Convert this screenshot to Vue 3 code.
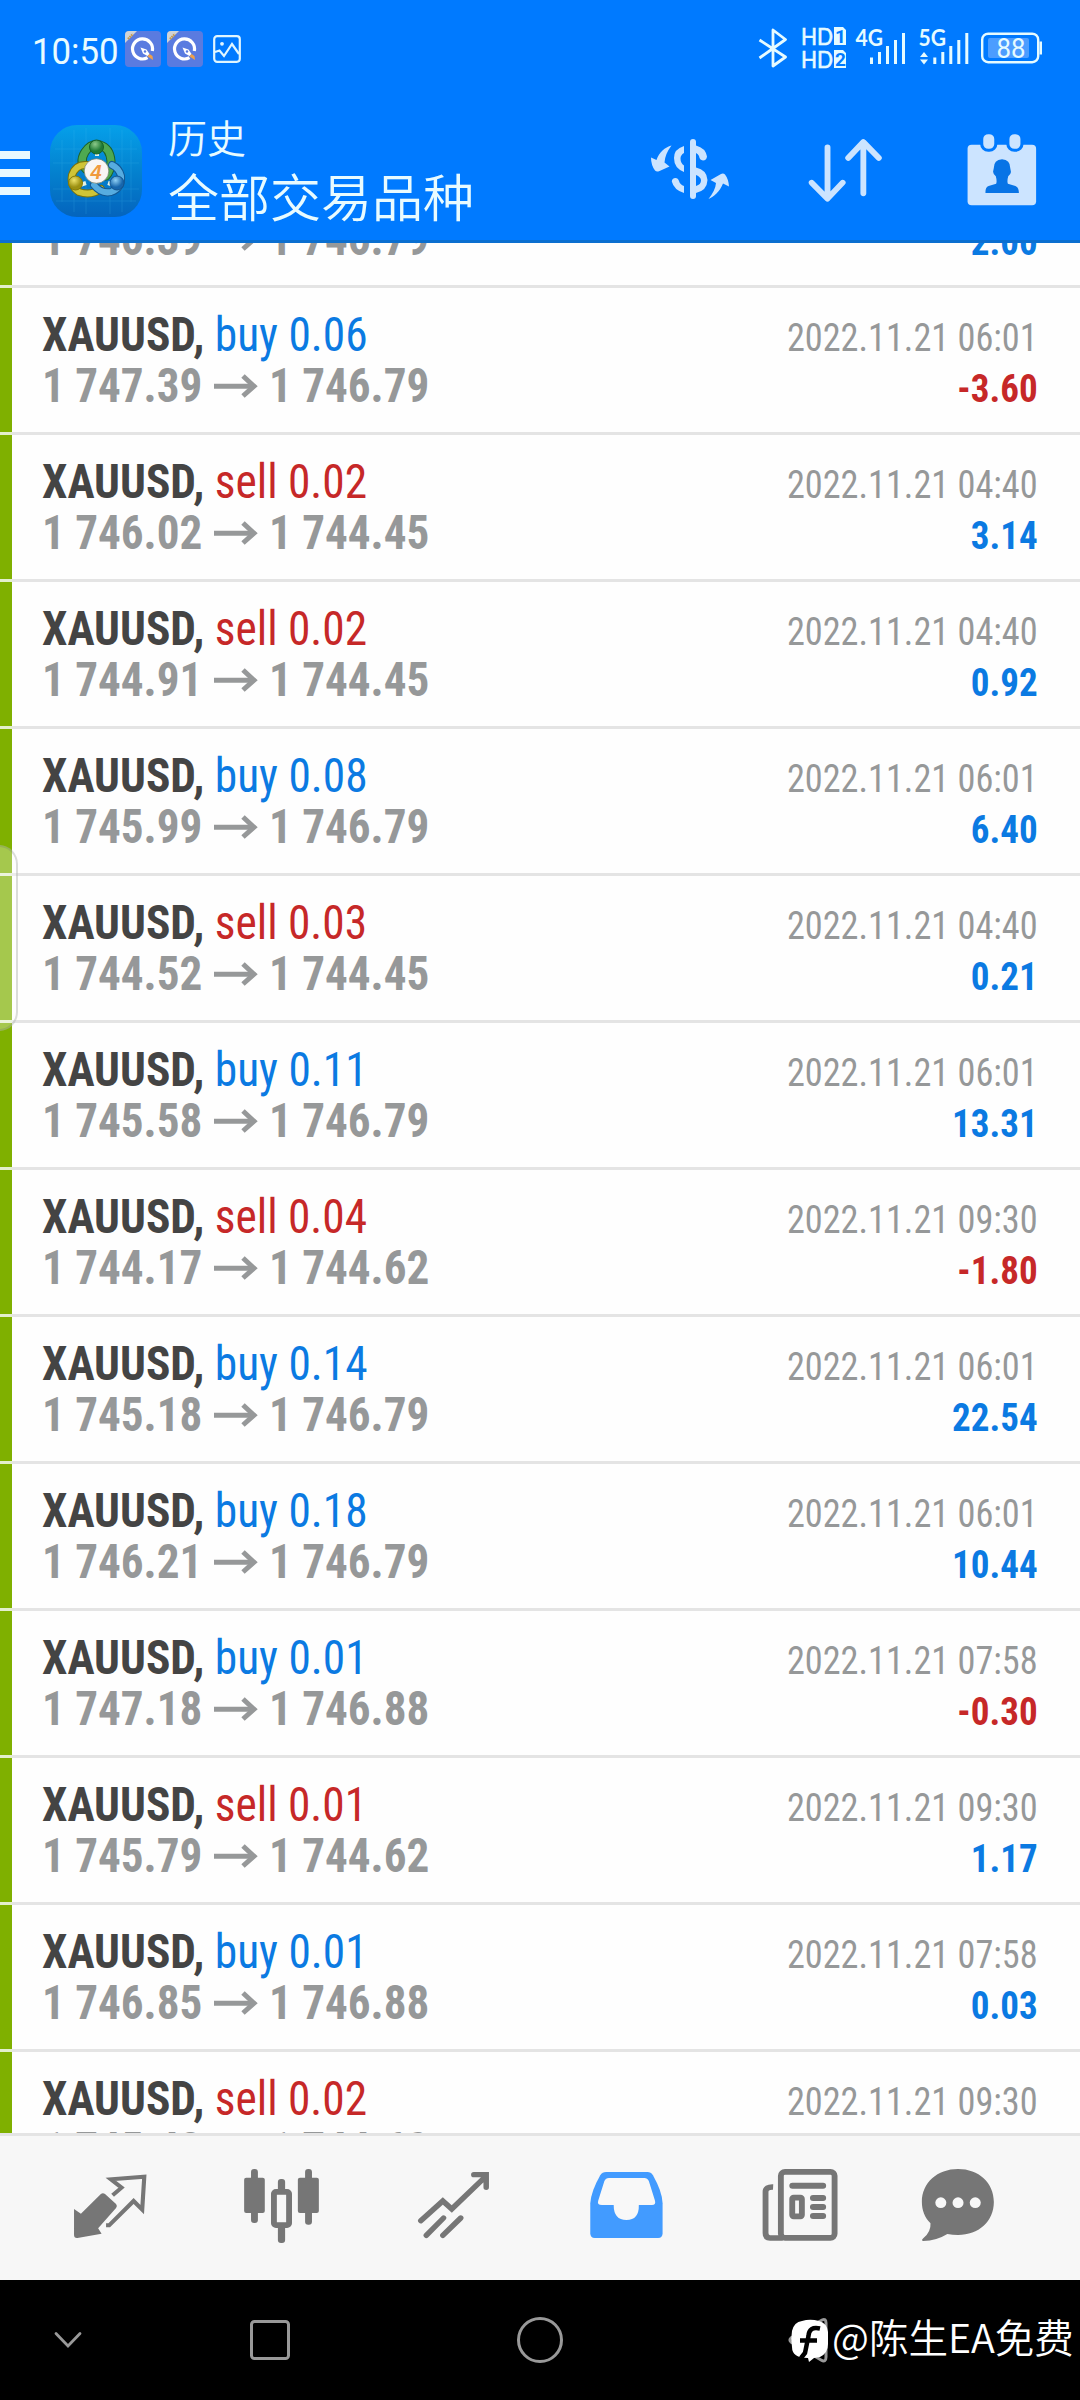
<script setup>
const trades = [
  ['buy', '0.05', '1 746.39', '1 746.79', '2022.11.21 06:01', '2.00'],
  ['buy', '0.06', '1 747.39', '1 746.79', '2022.11.21 06:01', '-3.60'],
  ['sell', '0.02', '1 746.02', '1 744.45', '2022.11.21 04:40', '3.14'],
  ['sell', '0.02', '1 744.91', '1 744.45', '2022.11.21 04:40', '0.92'],
  ['buy', '0.08', '1 745.99', '1 746.79', '2022.11.21 06:01', '6.40'],
  ['sell', '0.03', '1 744.52', '1 744.45', '2022.11.21 04:40', '0.21'],
  ['buy', '0.11', '1 745.58', '1 746.79', '2022.11.21 06:01', '13.31'],
  ['sell', '0.04', '1 744.17', '1 744.62', '2022.11.21 09:30', '-1.80'],
  ['buy', '0.14', '1 745.18', '1 746.79', '2022.11.21 06:01', '22.54'],
  ['buy', '0.18', '1 746.21', '1 746.79', '2022.11.21 06:01', '10.44'],
  ['buy', '0.01', '1 747.18', '1 746.88', '2022.11.21 07:58', '-0.30'],
  ['sell', '0.01', '1 745.79', '1 744.62', '2022.11.21 09:30', '1.17'],
  ['buy', '0.01', '1 746.85', '1 746.88', '2022.11.21 07:58', '0.03'],
  ['sell', '0.02', '1 745.43', '1 744.62', '2022.11.21 09:30', '1.62'],
].map(([side, lots, open, close, time, profit]) => ({ side, lots, open, close, time, profit }))
</script>

<template>
  <div class="screen">
    <header class="header">
      <div class="status">
        <span class="clock">10:50</span>
        <svg v-for="n in 2" :key="n" class="app-badge" viewBox="0 0 36 36">
          <rect width="36" height="36" rx="4" fill="#5a7be0" />
          <path d="M0 12V4a4 4 0 0 1 4-4h8z" fill="#cfd3d6" />
          <path d="M3 8l5-5" stroke="#c39a4e" stroke-width="2.4" stroke-dasharray="1.6 .7" />
          <path d="M22.500 26.600A10 10 0 1 1 27.300 20" fill="none" stroke="#fff" stroke-width="3.2" />
          <path d="M15.500 16.500l6 2 3 4.500-2 2-4.500-2.500z" fill="#fff" />
          <circle cx="20" cy="20.500" r="1.200" fill="#5a7be0" />
          <path d="M22.500 25.500l2-2.500 3 2 .5 4z" fill="#f0a04a" />
        </svg>
        <svg class="picture" viewBox="0 0 28 28" fill="none" stroke="#e0f6ff" stroke-width="2.200">
          <rect x="1.200" y="1.200" width="25.600" height="25.600" rx="3" />
          <path d="M2 17l4.500-1.500 4.500 5.500 8-12 7 10" />
          <circle cx="9" cy="8.800" r="1.900" fill="#e0f6ff" stroke="none" />
        </svg>
        <svg class="signals" viewBox="750 20 300 60" fill="none" stroke="#e6fbff">
          <path d="M759.500 41l26 17-12.500 9V31l12.500 9.500-26 18.500" stroke-width="2.800" stroke-linejoin="round" />
          <g class="hd" fill="#e6fbff" stroke="#e6fbff" stroke-width=".6">
            <text x="801" y="46" textLength="32" lengthAdjust="spacingAndGlyphs">HD</text>
            <text x="801" y="68.500" textLength="32" lengthAdjust="spacingAndGlyphs">HD</text>
          </g>
          <path d="M834 28h9l3 3v15h-12zM834 51h9l3 3v15h-12z" fill="#e6fbff" stroke="none" />
          <g class="sim" fill="#007aff" stroke="none">
            <text x="835" y="44">1</text><text x="835" y="67">2</text>
          </g>
          <g class="net" fill="#e6fbff" stroke="none">
            <text x="855.500" y="47" textLength="27.500" lengthAdjust="spacingAndGlyphs">4G</text>
            <text x="918.500" y="47" textLength="27.500" lengthAdjust="spacingAndGlyphs">5G</text>
          </g>
          <path d="M871.500 58.500v6.500m8-12v12m8-18v18m8-24v24m8-31v31M934.800 58.500v6.500m8-12v12m8-18v18m8-24v24m8-31v31" stroke-width="3" />
          <path d="M920 58l4-5 4 5zM920 60.500l4 5 4-5z" fill="#e6fbff" stroke="none" />
          <rect x="982.200" y="34.700" width="56" height="28.500" rx="6" stroke-width="2.400" />
          <rect x="988" y="39" width="41" height="20" rx="2" fill="#4c9dff" stroke="none" />
          <path d="M1039.500 42.500h2.500v13h-2.500z" fill="#e6fbff" stroke="none" />
          <text class="battery" x="996.500" y="59" textLength="29" lengthAdjust="spacingAndGlyphs" fill="#e6fbff" stroke="none">88</text>
        </svg>
      </div>
      <div class="toolbar">
        <div class="menu"><i></i><i></i><i></i></div>
        <svg class="logo" viewBox="0 0 92 92">
          <defs>
            <linearGradient id="bg" x1="0" y1="0" x2="0" y2="1">
              <stop offset="0" stop-color="#05a0ea" /><stop offset=".5" stop-color="#0482cf" /><stop offset="1" stop-color="#0464bd" />
            </linearGradient>
            <radialGradient id="g" cx=".4" cy=".3"><stop offset="0" stop-color="#8cc98a" /><stop offset="1" stop-color="#1f7a35" /></radialGradient>
            <radialGradient id="y" cx=".4" cy=".3"><stop offset="0" stop-color="#efe36a" /><stop offset="1" stop-color="#9c9012" /></radialGradient>
            <radialGradient id="b" cx=".4" cy=".3"><stop offset="0" stop-color="#8fd0f5" /><stop offset="1" stop-color="#1766ac" /></radialGradient>
          </defs>
          <rect width="92" height="92" rx="27" fill="url(#bg)" />
          <path d="M12 15v62M24 5v82M36 3v86M60 3v86M72 5v82M81 15v62M5 24h82M3 38h86M3 64h86M6 76h80" stroke="#4bc4f2" stroke-width=".7" opacity=".25" />
          <g fill="none" stroke-linecap="round">
            <path d="M38 46Q28 38 35 27Q41 18 50 20Q60 23 61 36Q61 46 56 51" stroke="#1d622c" stroke-width="9" />
            <path d="M38 46Q28 38 35 27Q41 18 50 20Q60 23 61 36Q61 46 56 51" stroke="#4ea951" stroke-width="7" />
            <path d="M51 64Q41 71 29 67Q20 61 22 50Q26 39 37 40" stroke="#77710c" stroke-width="8" />
            <path d="M51 64Q41 71 29 67Q20 61 22 50Q26 39 37 40" stroke="#cfc437" stroke-width="6" />
            <path d="M44 60Q51 69 61 67Q72 63 71 51Q69 43 62 40" stroke="#125894" stroke-width="8" />
            <path d="M44 60Q51 69 61 67Q72 63 71 51Q69 43 62 40" stroke="#56ace0" stroke-width="6" />
          </g>
          <path d="M36 58l-9 3M58 58l9 3M47 31v-9" stroke="#e5f2e4" stroke-width="4" />
          <circle cx="46.500" cy="22" r="7" fill="url(#g)" stroke="#176028" />
          <circle cx="25.500" cy="58" r="7" fill="url(#y)" stroke="#857b08" />
          <circle cx="67" cy="58" r="7" fill="url(#b)" stroke="#125490" />
          <circle cx="46.500" cy="46" r="12.300" fill="#f8f5f3" stroke="#6f7b65" stroke-width=".7" />
          <text class="four" x="46" y="53.500" text-anchor="middle">4</text>
        </svg>
        <div class="titles">
          <div class="section">历史</div>
          <div class="filter">全部交易品种</div>
        </div>
        <div class="actions">
          <svg width="93" height="80" viewBox="642 130 93 80" fill="#cce4ff">
            <path d="M671.500 145.500C665 147.500 659 152 656.500 160L651 157.500Q651 165 655 170.500Q656.500 172 659 171.200L669.500 166.500L664.500 162.500Q665 154 671.500 145.500z" />
            <path d="M708.500 199C714 196.500 719.500 192 723 183.500L729 186.500Q728.500 179 725 174.500Q723.500 173 721 174L710.500 180L716 183Q715.500 190 708.500 199z" />
            <path d="M684 146Q674 149 674 158Q674 168 684 172V165.500Q680.500 163 680.500 158.500Q680.500 155 684 153zM684 193Q674 190 671.800 181.500Q672 178 675.500 178Q678 178 679 181Q680 184.500 684 186z" />
            <rect x="690" y="139" width="6" height="60" rx="3" />
            <path d="M696 145.500Q705.500 148 707 156.500Q706.500 160.500 703 160.500Q699.500 160 699 156Q698 154 696 153zM696 167.500Q707 170 707.500 180Q707 190.500 696 193V186Q701 184.500 701 180.500Q701 177 696 175z" />
          </svg>
          <svg width="93" height="80" viewBox="760 390 270 240" preserveAspectRatio="none" fill="none" stroke="#cce4ff" stroke-width="17" stroke-linecap="round" stroke-linejoin="round">
            <path d="M837 442V594M791 548L837 596L881 548M941 580V430M897 474L941 426L986 474" />
          </svg>
          <svg width="83" height="80" viewBox="1220 390 241 240" preserveAspectRatio="none">
            <rect x="1242" y="434" width="199" height="182" rx="12" fill="#cce4ff" />
            <g fill="#cce4ff" stroke="#007aff" stroke-width="9">
              <rect x="1283" y="398" width="41" height="53" rx="19" />
              <rect x="1359" y="398" width="41" height="53" rx="19" />
            </g>
            <path d="M1342 478Q1366 479 1366 505L1368 516Q1367 524 1360 529Q1356 544 1359 551L1381 558Q1391 562 1391 579H1294Q1293 562 1303 558L1325 551Q1328 544 1324 529Q1317 524 1316 515L1318 505Q1318 479 1342 478z" fill="#0874e6" />
          </svg>
        </div>
      </div>
    </header>

    <main class="list">
      <div v-for="(t, i) in trades" :key="i" class="row">
        <div class="deal">
          <div class="line symbol"><b>XAUUSD,</b> <span :class="t.side">{{ t.side }} {{ t.lots }}</span></div>
          <div class="line prices">
            <span>{{ t.open }}</span>
            <svg viewBox="0 0 44 24" fill="none" stroke="#969899">
              <path d="M0 12.200h40" stroke-width="5" /><path d="M29 2l11 10.200L29 22" stroke-width="5" />
            </svg>
            <span>{{ t.close }}</span>
          </div>
        </div>
        <div class="result">
          <div class="line time">{{ t.time }}</div>
          <div class="line profit" :class="{ loss: t.profit[0] === '-' }">{{ t.profit }}</div>
        </div>
      </div>
      <div class="handle"></div>
    </main>

    <nav class="tabs">
      <svg viewBox="69.700 318 499.500 432" preserveAspectRatio="none" fill="#767676">
        <path d="M215 537L235 551L293 492Q299 487 305 492L337 522Q342 528 337 534L285 595L295 611L225 624Q215 625 215 615z" />
        <path d="M327 496L353 473L322 448L419 440L413 539L388 513L317 586H308" fill="none" stroke="#767676" stroke-width="12" />
      </svg>
      <svg viewBox="569.200 318 499.500 432" preserveAspectRatio="none" fill="#767676">
        <rect x="729" y="417" width="20" height="162" rx="9" /><rect x="709" y="443" width="60" height="106" rx="6" />
        <rect x="886" y="417" width="20" height="167" rx="9" /><rect x="865" y="443" width="61" height="106" rx="6" />
        <rect x="807" y="447" width="21" height="40" rx="9" /><rect x="807" y="580" width="21" height="59" rx="9" />
        <rect x="795.500" y="485.500" width="44" height="100" rx="6" fill="#f7f7f7" stroke="#767676" stroke-width="17" />
      </svg>
      <svg viewBox="1068.700 318 499.500 432" preserveAspectRatio="none" fill="none" stroke="#767676" stroke-width="16" stroke-linecap="round">
        <path d="M1222 572L1286 513L1312 537L1410 440M1376 434H1412V472" /><path d="M1238 616L1288 564M1286 616L1338 564" />
      </svg>
      <svg viewBox="0 318 499.500 432" preserveAspectRatio="none">
        <path d="M192 426H312Q322 426 328 436Q355 485 356 520V610Q356 624 343 624H159Q146 624 146 610V520Q148 485 175 436Q181 426 192 426z" fill="#429bff" />
        <path d="M200 444H303Q312 444 316 453L334 512Q337 525 325 525H287Q288 570 251 570Q214 570 214 525H180Q165 525 169 512L187 453Q191 444 200 444z" fill="#f8f8f8" />
      </svg>
      <svg viewBox="499.500 318 499.500 432" preserveAspectRatio="none" fill="none" stroke="#767676" stroke-width="17">
        <rect x="699.500" y="425.500" width="156" height="198" rx="12" />
        <path d="M677 471Q655 470 655 486V609Q655 624 668 624H705" />
        <path d="M733 467.500H822M793 504H822M793 531H822M793 558H822" stroke-linecap="round" stroke-width="18" />
        <rect x="732.500" y="503" width="28" height="56" rx="4" stroke-width="17" />
      </svg>
      <svg viewBox="999 318 499.500 432" preserveAspectRatio="none" fill="#767676">
        <path d="M1214 417C1274 417 1318 458 1318 516C1318 574 1274 615 1214 615Q1198 615 1183 612Q1152 632 1113 633Q1106 632 1113 625Q1136 606 1134 580C1117 563 1109 540 1109 516C1109 458 1154 417 1214 417z" />
        <g fill="#f8f8f8"><circle cx="1164" cy="518" r="16" /><circle cx="1214" cy="518" r="16" /><circle cx="1264" cy="518" r="16" /></g>
      </svg>
    </nav>

    <footer class="system">
      <svg width="760" height="120" viewBox="0 0 760 120" fill="none" stroke="#999" stroke-width="3">
        <path d="M56 53.500L68 66L80 53.500" stroke-width="2.800" stroke-linecap="round" />
        <rect x="251.500" y="41.500" width="37" height="37" rx="3" />
        <circle cx="540" cy="60" r="21.500" />
      </svg>
      <div class="credit">
        <svg width="42" height="50" viewBox="788 2315 42 50">
          <path d="M822 2320Q826 2318 826 2323V2357Q826 2363 821 2360L791 2342Q789 2340 791 2338z" fill="none" stroke="#999" stroke-width="3" />
          <path d="M802 2321Q810 2318.500 819 2321Q827 2323 828 2332V2344Q828 2353 820 2357L814 2358L809 2362L808 2358Q792 2358 792 2347Q790.500 2339 792 2331Q794 2322 802 2321z" fill="#fff" />
          <path d="M820 2328.500Q809 2326 808.500 2336L805 2353L801 2358M800 2340.500H817" fill="none" stroke="#000" stroke-width="4.500" />
        </svg>
        <span>@陈生EA免费</span>
      </div>
    </footer>
  </div>
</template>

<style>
body { margin: 0; }
</style>

<style scoped>
.screen { width: 1080px; height: 2400px; display: flex; flex-direction: column; overflow: hidden; background: #fefefe; font-family: Roboto, "Noto Sans CJK SC", sans-serif; }
svg { display: block; flex: none; }
.header { box-sizing: border-box; height: 243px; flex: none; background: #007aff; border-bottom: 3px solid #0b6fd0; color: #e8fbff; }
.status { height: 98px; padding-left: 32px; display: flex; align-items: center; }
.clock { width: 93px; font-size: 37px; line-height: 44px; padding-top: 5px; box-sizing: border-box; white-space: nowrap; transform: scaleX(.94); transform-origin: left; }
.app-badge { width: 36px; height: 36px; margin-right: 6px; }
.picture { width: 28px; height: 28px; margin-left: 4px; }
.signals { width: 300px; height: 60px; margin-left: auto; margin-right: 30px; }
.hd { font: 400 23px Lato, sans-serif; }
.sim { font: 700 19px Roboto, sans-serif; }
.net { font: 700 22px Lato, sans-serif; }
.battery { font: 400 27px Roboto, sans-serif; }
.toolbar { display: flex; height: 142px; }
.menu { width: 30px; padding-top: 53px; display: flex; flex-direction: column; gap: 10px; }
.menu i { height: 8px; background: #e8f8ff; }
.logo { width: 92px; height: 92px; margin: 27px 0 0 20px; }
.four { font: italic 700 20px "Liberation Sans", sans-serif; fill: #f09a3e; }
.titles { margin-left: 26px; padding-top: 12px; white-space: nowrap; font-family: "Noto Sans CJK SC", sans-serif; font-weight: 350; }
.section { font-size: 39px; line-height: 52px; }
.filter { font-size: 51px; line-height: 67px; }
.actions { display: flex; gap: 66px; margin: 32px 37px 0 auto; }
.list { position: relative; height: 1890px; flex: none; overflow: hidden; }
.row { box-sizing: border-box; height: 147px; display: flex; justify-content: space-between; padding: 21px 42px 0 42px; background: linear-gradient(#e4e4e4, #e4e4e4) 12px 144px / 1068px 3px no-repeat, linear-gradient(#e3efcd, #e3efcd) 0 144px / 12px 3px no-repeat, linear-gradient(#7fb000, #7fb000) 0 0 / 12px 147px no-repeat; }
.row:first-child { margin-top: -102px; }
.line { white-space: nowrap; height: 51px; line-height: 51px; font-stretch: 75%; }
.deal { font-size: 48px; }
.symbol { transform: scaleX(.945); transform-origin: left; color: #444; }
.prices { display: flex; align-items: center; font-weight: 700; color: #969899; }
.prices span { display: block; width: 160px; transform: scaleX(.94); transform-origin: left; }
.prices svg { width: 44px; height: 24px; margin: 1px 11px 0 12px; }
.buy { color: #0b7ae2; font-weight: 450; }
.sell { color: #c62828; font-weight: 450; }
.result { padding-top: 4px; font-size: 39px; text-align: right; }
.time { color: #969899; transform: scaleX(.93); transform-origin: right; font-weight: 430; }
.profit { font-weight: 700; color: #0b7ae2; transform: scaleX(.95); transform-origin: right; }
.profit.loss { color: #c62828; }
.handle { position: absolute; left: -20px; top: 602px; width: 34px; height: 182px; border: 2px solid rgba(110, 120, 110, .25); border-radius: 26px; background: rgba(255, 255, 255, .3); }
.tabs { height: 144px; flex: none; border-top: 3px solid #e4e4e4; background: #f7f7f7; display: flex; padding-left: 24px; }
.tabs svg { width: 172px; height: 144px; }
.system { height: 120px; flex: none; background: #000; display: flex; }
.credit { display: flex; margin-left: 28px; padding-top: 35px; color: #fff; font: 350 39.500px/50px "Noto Sans CJK SC", sans-serif; white-space: nowrap; }
.credit span { margin: -4px 0 0 2px; }
</style>
